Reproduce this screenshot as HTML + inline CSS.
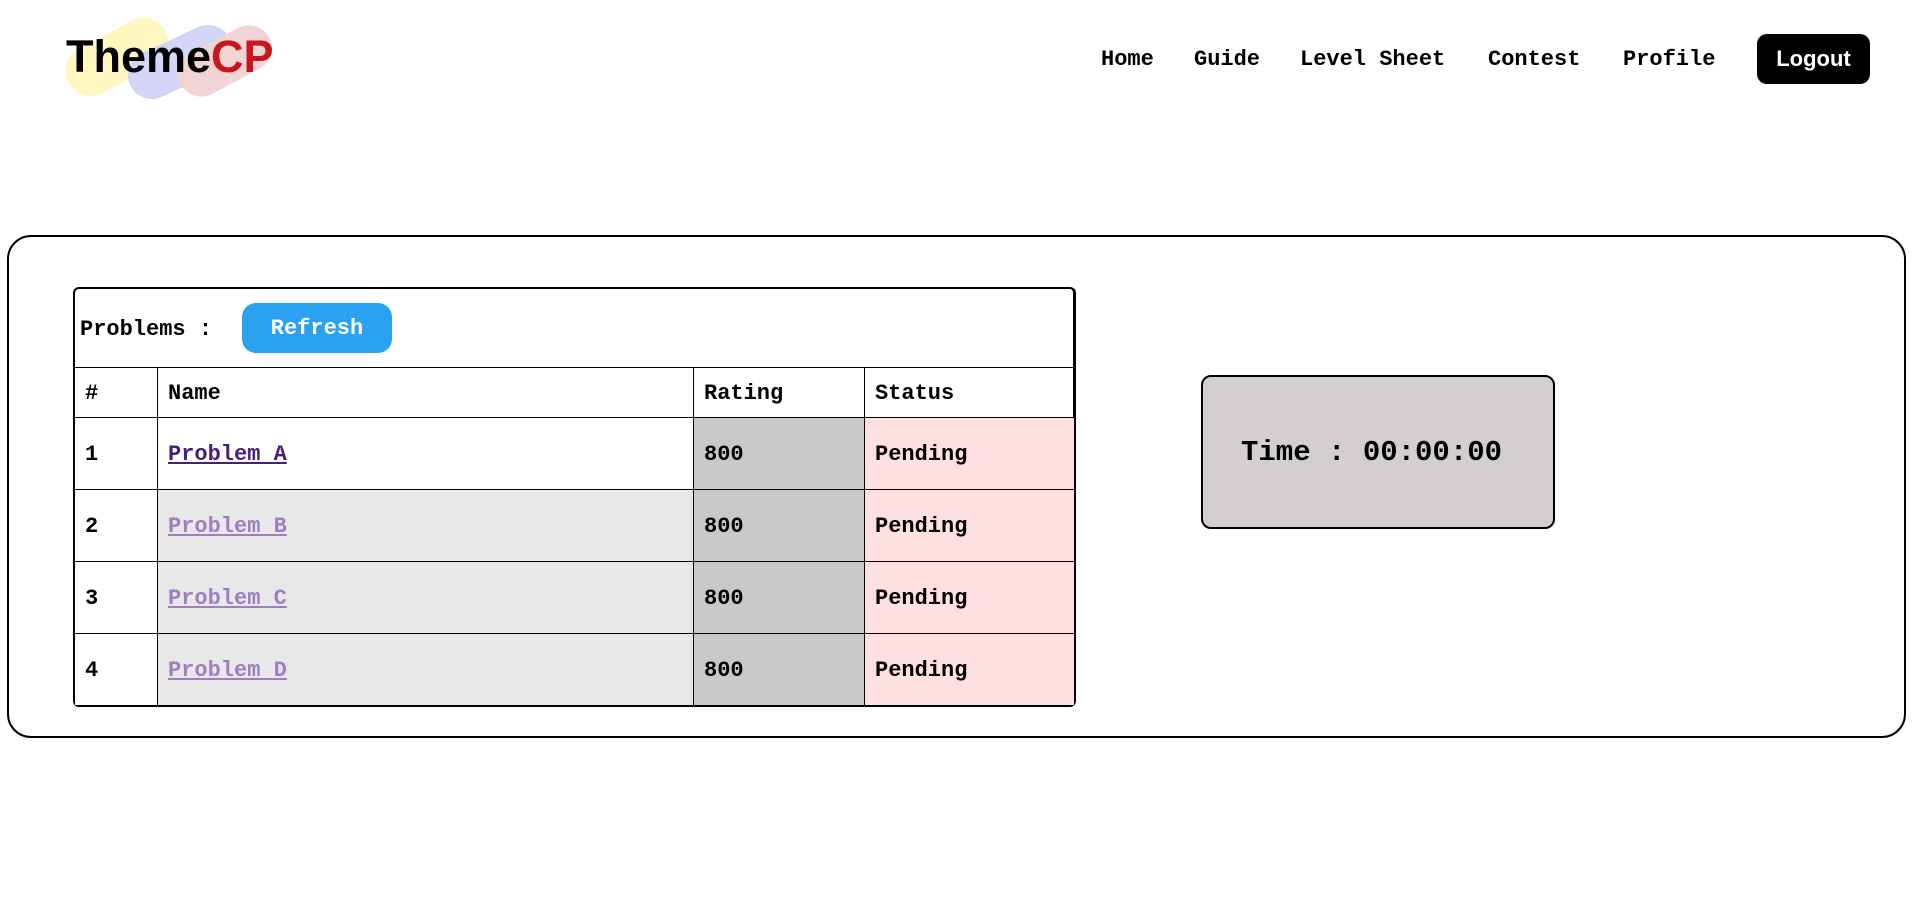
<!DOCTYPE html>
<html><head><style>
body{margin:0;width:1916px;height:922px;background:#fff;position:relative;font-family:"Liberation Mono",monospace;font-weight:bold;overflow:hidden}
.a{position:absolute}
.nav{top:47px;font-size:22px;color:#000}
.cell{position:absolute;box-sizing:border-box;display:flex;align-items:center;padding-left:11px;font-size:22px;padding-top:2px}
a{text-decoration:underline}
</style></head><body>
<div class="a" style="left:62px;top:32px;width:110px;height:50px;background:#fff7bf;border-radius:25px;transform:rotate(-28deg)"></div>
<div class="a" style="left:125px;top:38px;width:110px;height:48px;background:#d3d5f6;border-radius:24px;transform:rotate(-25deg)"></div>
<div class="a" style="left:175px;top:38px;width:100px;height:46px;background:#f2d4d4;border-radius:23px;transform:rotate(-28deg)"></div>
<div class="a" style="left:66px;top:31px;font-family:'Liberation Sans',sans-serif;font-size:45px;letter-spacing:0px;font-weight:900;color:#000">Theme<span style="color:#c8161d">CP</span></div>
<div class="a nav" style="left:1101px">Home</div>
<div class="a nav" style="left:1194px">Guide</div>
<div class="a nav" style="left:1300px">Level Sheet</div>
<div class="a nav" style="left:1488px">Contest</div>
<div class="a nav" style="left:1623px">Profile</div>
<div class="a" style="left:1757px;top:34px;width:113px;height:50px;background:#000;border-radius:10px;color:#fff;font-family:'Liberation Sans',sans-serif;font-size:22px;display:flex;align-items:center;justify-content:center">Logout</div>
<div class="a" style="left:7px;top:235px;width:1899px;height:503px;border:2px solid #000;border-radius:24px;box-sizing:border-box"></div>
<div class="a" style="left:73px;top:287px;width:1003px;height:420px;border:2px solid #000;border-bottom-width:3px;border-right-width:3px;border-radius:6px;box-sizing:border-box;overflow:hidden">
</div>
<div class="cell" style="left:75px;top:290px;height:77px;padding-left:5px">Problems :</div>
<div class="a" style="left:242px;top:303px;width:150px;height:50px;background:#29a3f1;border-radius:14px;color:#fff;font-size:22px;display:flex;align-items:center;justify-content:center">Refresh</div>
<div class="a" style="left:75px;top:367px;width:999px;height:338px">
<div class="a" style="left:0;top:50px;width:83px;height:288px;background:#fff"></div>
<div class="a" style="left:83px;top:122px;width:535px;height:216px;background:#e8e8e8"></div>
<div class="a" style="left:618px;top:50px;width:171px;height:288px;background:#c9c9c9"></div>
<div class="a" style="left:789px;top:50px;width:210px;height:288px;background:#fee0e0"></div>
</div>
<div class="a" style="left:74px;top:367px;width:1001px;height:1px;background:#000"></div>
<div class="a" style="left:74px;top:417px;width:1001px;height:1px;background:#000"></div>
<div class="a" style="left:74px;top:489px;width:1001px;height:1px;background:#000"></div>
<div class="a" style="left:74px;top:561px;width:1001px;height:1px;background:#000"></div>
<div class="a" style="left:74px;top:633px;width:1001px;height:1px;background:#000"></div>
<div class="a" style="left:157px;top:367px;width:1px;height:338px;background:#000"></div>
<div class="a" style="left:693px;top:367px;width:1px;height:338px;background:#000"></div>
<div class="a" style="left:864px;top:367px;width:1px;height:338px;background:#000"></div>
<div class="cell" style="left:74px;top:368px;height:49px">#</div>
<div class="cell" style="left:157px;top:368px;height:49px">Name</div>
<div class="cell" style="left:693px;top:368px;height:49px">Rating</div>
<div class="cell" style="left:864px;top:368px;height:49px">Status</div>

<div class="cell" style="left:74px;top:418px;height:71px">1</div>
<div class="cell" style="left:157px;top:418px;height:71px"><a style="color:#4a1d80">Problem A</a></div>
<div class="cell" style="left:693px;top:418px;height:71px">800</div>
<div class="cell" style="left:864px;top:418px;height:71px">Pending</div>

<div class="cell" style="left:74px;top:490px;height:71px">2</div>
<div class="cell" style="left:157px;top:490px;height:71px"><a style="color:#a07fc0">Problem B</a></div>
<div class="cell" style="left:693px;top:490px;height:71px">800</div>
<div class="cell" style="left:864px;top:490px;height:71px">Pending</div>

<div class="cell" style="left:74px;top:562px;height:71px">3</div>
<div class="cell" style="left:157px;top:562px;height:71px"><a style="color:#a07fc0">Problem C</a></div>
<div class="cell" style="left:693px;top:562px;height:71px">800</div>
<div class="cell" style="left:864px;top:562px;height:71px">Pending</div>

<div class="cell" style="left:74px;top:634px;height:71px">4</div>
<div class="cell" style="left:157px;top:634px;height:71px"><a style="color:#a07fc0">Problem D</a></div>
<div class="cell" style="left:693px;top:634px;height:71px">800</div>
<div class="cell" style="left:864px;top:634px;height:71px">Pending</div>

<div class="a" style="left:1201px;top:375px;width:354px;height:154px;background:#d3cfcf;border:2px solid #000;border-radius:10px;box-sizing:border-box;display:flex;align-items:center;padding-left:38px;font-size:29px">Time : 00:00:00</div>
</body></html>
